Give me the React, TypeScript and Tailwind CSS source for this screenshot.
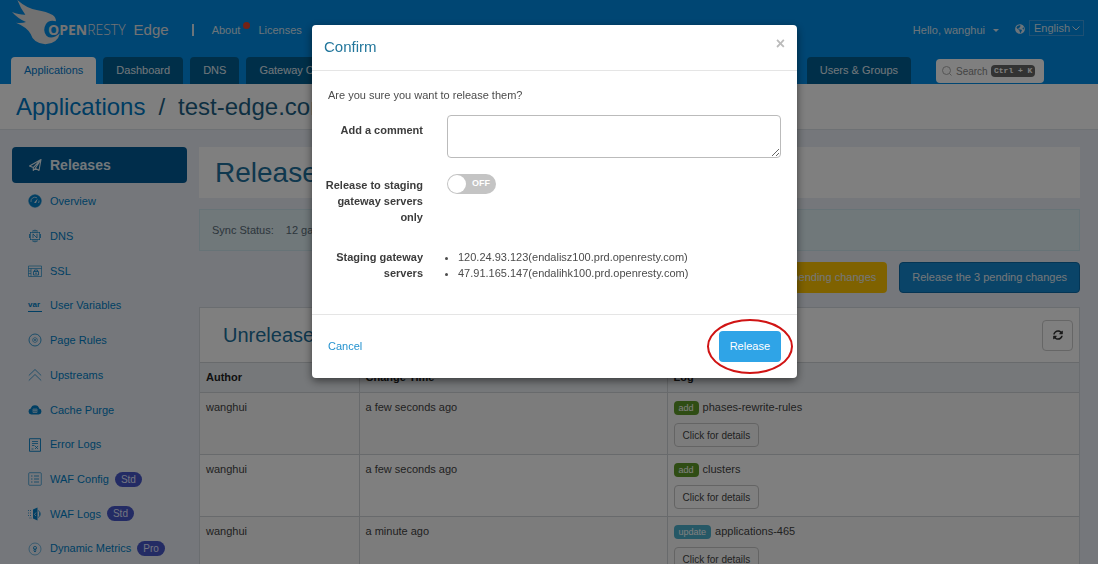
import type { ReactNode } from "react";
import { FaGlobeAmericas, FaSyncAlt } from "react-icons/fa";

/* Data */
const ROWS = [
    { author: "wanghui", time: "a few seconds ago", action: "add", target: "phases-rewrite-rules" },
    { author: "wanghui", time: "a few seconds ago", action: "add", target: "clusters" },
    { author: "wanghui", time: "a minute ago", action: "update", target: "applications-465" },
];

const SERVERS = [
    "120.24.93.123(endalisz100.prd.openresty.com)",
    "47.91.165.147(endalihk100.prd.openresty.com)",
];

/* Sidebar icons, all on a 14px grid */
function Icon({ children }: { children: ReactNode }) {
    return (
        <svg
            viewBox="0 0 14 14"
            className="h-3.5 w-3.5 shrink-0"
            fill="none"
            stroke="currentColor"
            strokeWidth="0.75"
            aria-hidden="true"
        >
            {children}
        </svg>
    );
}

const NAV: { label: string; badge?: string; icon: ReactNode }[] = [
    {
        label: "Overview",
        icon: (
            <>
                <circle cx="7" cy="7" r="6.2" fill="currentColor" />
                <path d="M3 8a4 4 0 0 1 6-4.2M11 6.5A4 4 0 0 1 10.5 9" stroke="#e9eef6" strokeWidth="0.7" />
                <path d="M6 8.8 9.8 4.6 8 9z" fill="#e9eef6" stroke="none" />
            </>
        ),
    },
    {
        label: "DNS",
        icon: (
            <>
                <path
                    d="M4.500 1.800Q7 .5 9.500 1.800M4.500 12.200Q7 13.500 9.500 12.200M2.500 3v8M11.500 3v8M7 1v3M7 10v3M2 3.500h10M2 10.500h10M5 1.800v2.500M9 1.800v2.500M5 10v2.200M9 10v2.200"
                    strokeWidth="0.6"
                />
                <path d="M1.500 5v4M12.500 5v4M5 9V5l4 4V5" />
            </>
        ),
    },
    {
        label: "SSL",
        icon: (
            <>
                <path d="M.5 2h13v10.500H.5zM.5 4.500h13M3 4.500v8M.5 7H3M.5 9.500H3" strokeWidth="0.6" />
                <path d="M5.500 7.500h5V11h-5zM6.500 7.500V6h3v1.500M7 9.200h2" />
            </>
        ),
    },
    {
        label: "User Variables",
        icon: null,
    },
    {
        label: "Page Rules",
        icon: (
            <>
                <circle cx="7" cy="7" r="6" />
                <path d="M7 4.500 9.200 5.800v2.500L7 9.600 4.800 8.300V5.800z" opacity=".7" />
                <circle cx="7" cy="7" r="0.6" />
            </>
        ),
    },
    {
        label: "Upstreams",
        icon: <path d="M.8 7.500 7 1.500l6.200 6M.8 12.500 7 6.500l6.200 6" strokeWidth="0.7" />,
    },
    {
        label: "Cache Purge",
        icon: (
            <>
                <path
                    d="M3.300 11.500a3 3 0 0 1-.5-5.900 4.300 4.300 0 0 1 8.400 0 3 3 0 0 1-.5 5.900z"
                    fill="currentColor"
                    stroke="none"
                />
                <path d="M5 6h4v3.500H5zM7 6v3.500M5 7.700h4" stroke="#e9eef6" strokeWidth="0.6" />
            </>
        ),
    },
    {
        label: "Error Logs",
        icon: (
            <>
                <path d="M1.500.7h11v12.600h-11z" strokeWidth="0.9" />
                <path d="M4 3.500h6M4 5.500h6M4 7.500h2.500M7 8l3 3M10 8l-3 3M3.500 11h2" />
            </>
        ),
    },
    {
        label: "WAF Config",
        badge: "Std",
        icon: (
            <>
                <rect x="0.7" y="0.7" width="12.6" height="12.6" rx="1" strokeWidth="0.6" />
                <path d="M3 4h1.500M3 7h1.500M3 10h1.500M6 4h5M6 7h5M6 10h5" />
            </>
        ),
    },
    {
        label: "WAF Logs",
        badge: "Std",
        icon: (
            <>
                <path d="M5 2.500 9.500.500v13L5 11.500z" fill="currentColor" stroke="none" />
                <path d="M10 3.500a3.800 3.800 0 0 1 0 7M11.500 5.500v3" />
                <path d="M0 3.500h4M0 6h4M0 8.500h4M1.500 11H4" strokeDasharray="1 1" />
                <path d="M6.500 7.500 8 5.500M6.500 7.500 8 9" stroke="#e9eef6" />
            </>
        ),
    },
    {
        label: "Dynamic Metrics",
        badge: "Pro",
        icon: (
            <>
                <circle cx="7" cy="7" r="6" strokeWidth="0.5" />
                <circle cx="7" cy="6" r="1.600" />
                <path d="M7 6v4M5.500 8.500 7 10l1-1.500" />
            </>
        ),
    },
];

/* Top header */
function Tab({ label, active }: { label: string; active?: boolean }) {
    return (
        <a
            href="#"
            className={
                active
                    ? "flex h-[27px] items-center rounded-t bg-white px-[13px] text-[#0079cc]"
                    : "flex h-[27px] items-center rounded-t bg-[#005f92] px-[13px] text-[#e2edf5]"
            }
        >
            {label}
        </a>
    );
}

function Header() {
    return (
        <header className="flex h-[84px] flex-col bg-[#008ce6] text-[#d8e8f4]">
            <div className="flex h-[57px] items-start pl-3 pr-[14px]">
                <a href="#" className="flex items-start text-[#e6e6e6]">
                    <svg viewBox="36 0 150 135" className="h-[45px] w-[50px]" aria-hidden="true">
                        <path
                            fill="#e2e2e2"
                            d="M52 0Q80 25 110 30Q140 35 158 45Q168 52 168 64Q148 58 138 72Q126 92 140 108Q156 120 180 100Q172 132 136 133Q100 130 92 102Q82 82 48 68Q66 70 78 66Q56 58 36 36Q60 45 76 44Q62 26 52 0Z"
                        />
                    </svg>
                    <span className="-ml-3.5 mt-5 font-['Open_Sans'] text-[14px] leading-5">
                        <b className="font-bold">OPEN</b>
                        <span className="font-light">RESTY</span>
                    </span>
                    <span className="ml-2 mt-5 text-[15px] leading-5">Edge</span>
                </a>
                <span className="ml-[23px] mt-6 h-3 w-0.5 bg-[#d8e8f4]" />
                <nav className="ml-[18px] mt-[22px] flex gap-[18px] leading-4">
                    <a href="#" className="relative">
                        About
                        <span className="absolute -right-2.5 top-0 h-[7px] w-[7px] rounded-full bg-[#e8442c]" />
                    </a>
                    <a href="#">Licenses</a>
                </nav>
                <button type="button" className="ml-auto mt-[22px] flex items-center leading-4">
                    Hello, wanghui
                    <span className="ml-2 border-x-[3px] border-t-[3px] border-x-transparent border-t-current" />
                </button>
                <FaGlobeAmericas className="ml-4 mt-6 h-2.5 w-2.5" aria-hidden="true" />
                <div className="relative ml-1 mt-5">
                    <select
                        aria-label="Language"
                        className="h-4 w-[55px] appearance-none border border-[#3da0e6] pl-1 leading-3 outline-none"
                    >
                        <option>English</option>
                    </select>
                    <svg
                        viewBox="0 0 8 5"
                        className="pointer-events-none absolute right-1 top-1.5 h-[5px] w-2"
                        fill="none"
                        stroke="currentColor"
                        aria-hidden="true"
                    >
                        <path d="M.5.500 4 4 7.500.500" />
                    </svg>
                </div>
            </div>
            <div className="flex items-end gap-[7px] pl-[11px] pr-[54px]">
                <Tab label="Applications" active />
                <Tab label="Dashboard" />
                <Tab label="DNS" />
                <Tab label="Gateway Clusters" />
                <div className="ml-auto flex items-end gap-[25px]">
                    <Tab label="Users & Groups" />
                    <label className="mb-px flex h-6 w-[108px] items-center rounded-sm bg-white pl-1.5 text-[10px] text-[#777]">
                        <svg
                            viewBox="0 0 10 10"
                            className="h-2.5 w-2.5 shrink-0 text-[#aaa]"
                            fill="none"
                            stroke="currentColor"
                            aria-hidden="true"
                        >
                            <path d="M7.500 7.500 9.500 9.500M8.500 4.500a4 4 0 1 1-8 0 4 4 0 0 1 8 0" />
                        </svg>
                        <input
                            aria-label="Search"
                            placeholder="Search"
                            className="ml-1 w-[35px] outline-none placeholder:text-[#888]"
                        />
                        <kbd className="whitespace-nowrap rounded-sm bg-[#666] px-[3px] font-['Liberation_Mono'] text-[8px] font-bold leading-3 text-white">
                            Ctrl + K
                        </kbd>
                    </label>
                </div>
            </div>
        </header>
    );
}

/* Left menu */
function Sidebar() {
    return (
        <nav className="w-[175px] shrink-0 text-[#007fc8]">
            <a
                href="#"
                className="mb-px flex h-9 items-center gap-2 rounded-sm bg-[#005a96] pl-4 text-[14px] font-bold text-[#e6f0f6]"
            >
                <Icon>
                    <path
                        d="M1.500 8 13 1.500 11 12.500 7.300 10.300 5.300 12.500V9.600zM5.300 9.600 13 1.500 7.300 10.300"
                        strokeWidth="1.1"
                        strokeLinejoin="round"
                    />
                </Icon>
                Releases
            </a>
            <ul className="flex h-[382px] flex-col">
                {NAV.map((item) => (
                    <li key={item.label} className="flex-1">
                        <a href="#" className="flex h-full items-center gap-2 pl-4">
                            {item.icon ? (
                                <Icon>{item.icon}</Icon>
                            ) : (
                                <span className="w-3.5 border-b border-current pb-0.5 text-[8px] font-bold leading-[9px]">
                                    var
                                </span>
                            )}
                            <span>{item.label}</span>
                            {item.badge && (
                                <span className="-ml-0.5 rounded-full bg-[#4656c8] px-1.5 text-[10px] leading-[15px] text-[#e4e8ff]">
                                    {item.badge}
                                </span>
                            )}
                        </a>
                    </li>
                ))}
            </ul>
        </nav>
    );
}

/* Pending changes */
function ChangesTable() {
    return (
        <section className="mt-[14px] border border-[#d5dae0] bg-white">
            <div className="flex h-[54px] items-center justify-between pl-[23px] pr-[6px]">
                <h2 className="text-[20px] text-[#20709c]">Unreleased</h2>
                <button
                    type="button"
                    aria-label="Refresh"
                    className="flex h-[31px] w-[31px] items-center justify-center rounded-sm border border-[#ccc] text-[#333]"
                >
                    <FaSyncAlt className="h-2.5 w-2.5" />
                </button>
            </div>
            <table className="w-full table-fixed border-collapse text-left text-[#444]">
                <thead className="bg-[#edf1f5] text-[#222]">
                    <tr className="h-[30px] border-y border-[#d0d4d8]">
                        <th className="w-[159px] border-r border-[#d0d4d8] px-1.5">Author</th>
                        <th className="w-[308px] border-r border-[#d0d4d8] px-1.5">Change Time</th>
                        <th className="px-1.5">Log</th>
                    </tr>
                </thead>
                <tbody>
                    {ROWS.map((row) => (
                        <tr key={row.target} className="h-[62px] border-b border-[#d0d4d8] align-top odd:bg-[#f9f9f9]">
                            <td className="border-r border-[#d0d4d8] px-1.5 pt-1.5 leading-4">{row.author}</td>
                            <td className="border-r border-[#d0d4d8] px-1.5 pt-1.5 leading-4">{row.time}</td>
                            <td className="px-1.5 pt-1.5">
                                <div className="flex items-center gap-1 leading-4">
                                    <span
                                        className={
                                            row.action === "add"
                                                ? "mt-0.5 rounded-sm bg-[#5f9a28] px-[5px] text-[9px] leading-[14px] text-white"
                                                : "mt-0.5 rounded-sm bg-[#4cb0cc] px-[5px] text-[9px] leading-[14px] text-white"
                                        }
                                    >
                                        {row.action}
                                    </span>
                                    {row.target}
                                </div>
                                <button
                                    type="button"
                                    className="mt-2 h-6 rounded-sm border border-[#c8c8c8] px-2 text-[10px]"
                                >
                                    Click for details
                                </button>
                            </td>
                        </tr>
                    ))}
                </tbody>
            </table>
        </section>
    );
}

/* Confirm dialog */
function ConfirmDialog() {
    return (
        <div className="fixed inset-0 bg-black/50 pl-[11px] pt-[25px]">
            <div
                role="dialog"
                aria-labelledby="confirm-title"
                className="mx-auto max-w-[485px] rounded bg-white text-[#4c4c4c] shadow-[0_3px_9px_rgba(0,0,0,0.5)]"
            >
                <div className="flex h-[46px] items-center justify-between border-b border-[#e5e5e5] px-3">
                    <h4 id="confirm-title" className="text-[15px] text-[#23779c]">
                        Confirm
                    </h4>
                    <button type="button" aria-label="Close" className="mb-2 text-[16px] font-bold leading-4 text-[#bbb]">
                        ×
                    </button>
                </div>
                <form className="px-4 pb-[33px] pt-4">
                    <p className="leading-4">Are you sure you want to release them?</p>
                    <div className="-ml-1 mt-3 grid grid-cols-[99px_1fr] gap-x-6">
                        <label htmlFor="comment" className="pt-[7px] text-right font-bold leading-4 text-[#3c3c3c]">
                            Add a comment
                        </label>
                        <textarea id="comment" className="h-[43px] w-full rounded-sm border border-[#bbb] outline-none" />
                        <label htmlFor="staging" className="mt-[19px] text-right font-bold leading-4 text-[#3c3c3c]">
                            Release to staging gateway servers only
                        </label>
                        <label className="relative mt-4 flex h-5 w-[49px] cursor-pointer items-center justify-end rounded-full bg-[#c4c4c4] pr-1.5 text-[9px] font-bold text-white">
                            <input id="staging" type="checkbox" role="switch" className="peer sr-only" />
                            OFF
                            <span className="absolute left-px top-px h-[18px] w-[18px] rounded-full bg-white" />
                        </label>
                        <p className="mt-6 text-right font-bold leading-4 text-[#3c3c3c]">Staging gateway servers</p>
                        <ul className="mt-6 list-disc pl-[11px] leading-4">
                            {SERVERS.map((server) => (
                                <li key={server}>{server}</li>
                            ))}
                        </ul>
                    </div>
                </form>
                <div className="flex h-16 items-center justify-between border-t border-[#e5e5e5] px-4">
                    <button type="button" className="text-[#2492cf]">
                        Cancel
                    </button>
                    <div className="relative">
                        <button type="button" className="h-[31px] rounded-sm bg-[#2fa4e7] px-[11px] text-white">
                            Release
                        </button>
                        <span className="pointer-events-none absolute -inset-x-3 -inset-y-3 rounded-[50%] border-2 border-[#d01414]" />
                    </div>
                </div>
            </div>
        </div>
    );
}

export default function App() {
    return (
        <div className="h-screen overflow-hidden bg-[#eaeff6] font-['Liberation_Sans',Arial,sans-serif] text-[11px]">
            <Header />
            <div className="flex h-[46px] items-center gap-[13px] border-b border-[#dde2e8] bg-white pl-4 text-[24px] text-[#1c5f84]">
                <a href="#" className="text-[#0079c4]">
                    Applications
                </a>
                <span>/</span>
                <span>test-edge.com</span>
            </div>
            <div className="flex gap-3 pl-3 pr-[18px] pt-[17px]">
                <Sidebar />
                <main className="min-w-0 flex-1">
                    <h1 className="flex h-[51px] items-center bg-white pl-4 text-[28px] text-[#20709c]">Releases</h1>
                    <div className="mt-[11px] flex h-[42px] items-center gap-3 border border-[#cfe6ee] bg-[#e0f0f5] pl-3 text-[#5a6c78]">
                        <span>Sync Status:</span>
                        <span>12 gateway servers</span>
                    </div>
                    <div className="mt-[11px] flex justify-end gap-3 text-[#e8eef2]">
                        <button type="button" className="h-[31px] rounded-sm bg-[#ffc400] px-[11px]">
                            Cancel the 3 pending changes
                        </button>
                        <button type="button" className="h-[31px] rounded-sm border border-[#0a6aa8] bg-[#1488d0] px-3">
                            Release the 3 pending changes
                        </button>
                    </div>
                    <ChangesTable />
                </main>
            </div>
            <ConfirmDialog />
        </div>
    );
}
